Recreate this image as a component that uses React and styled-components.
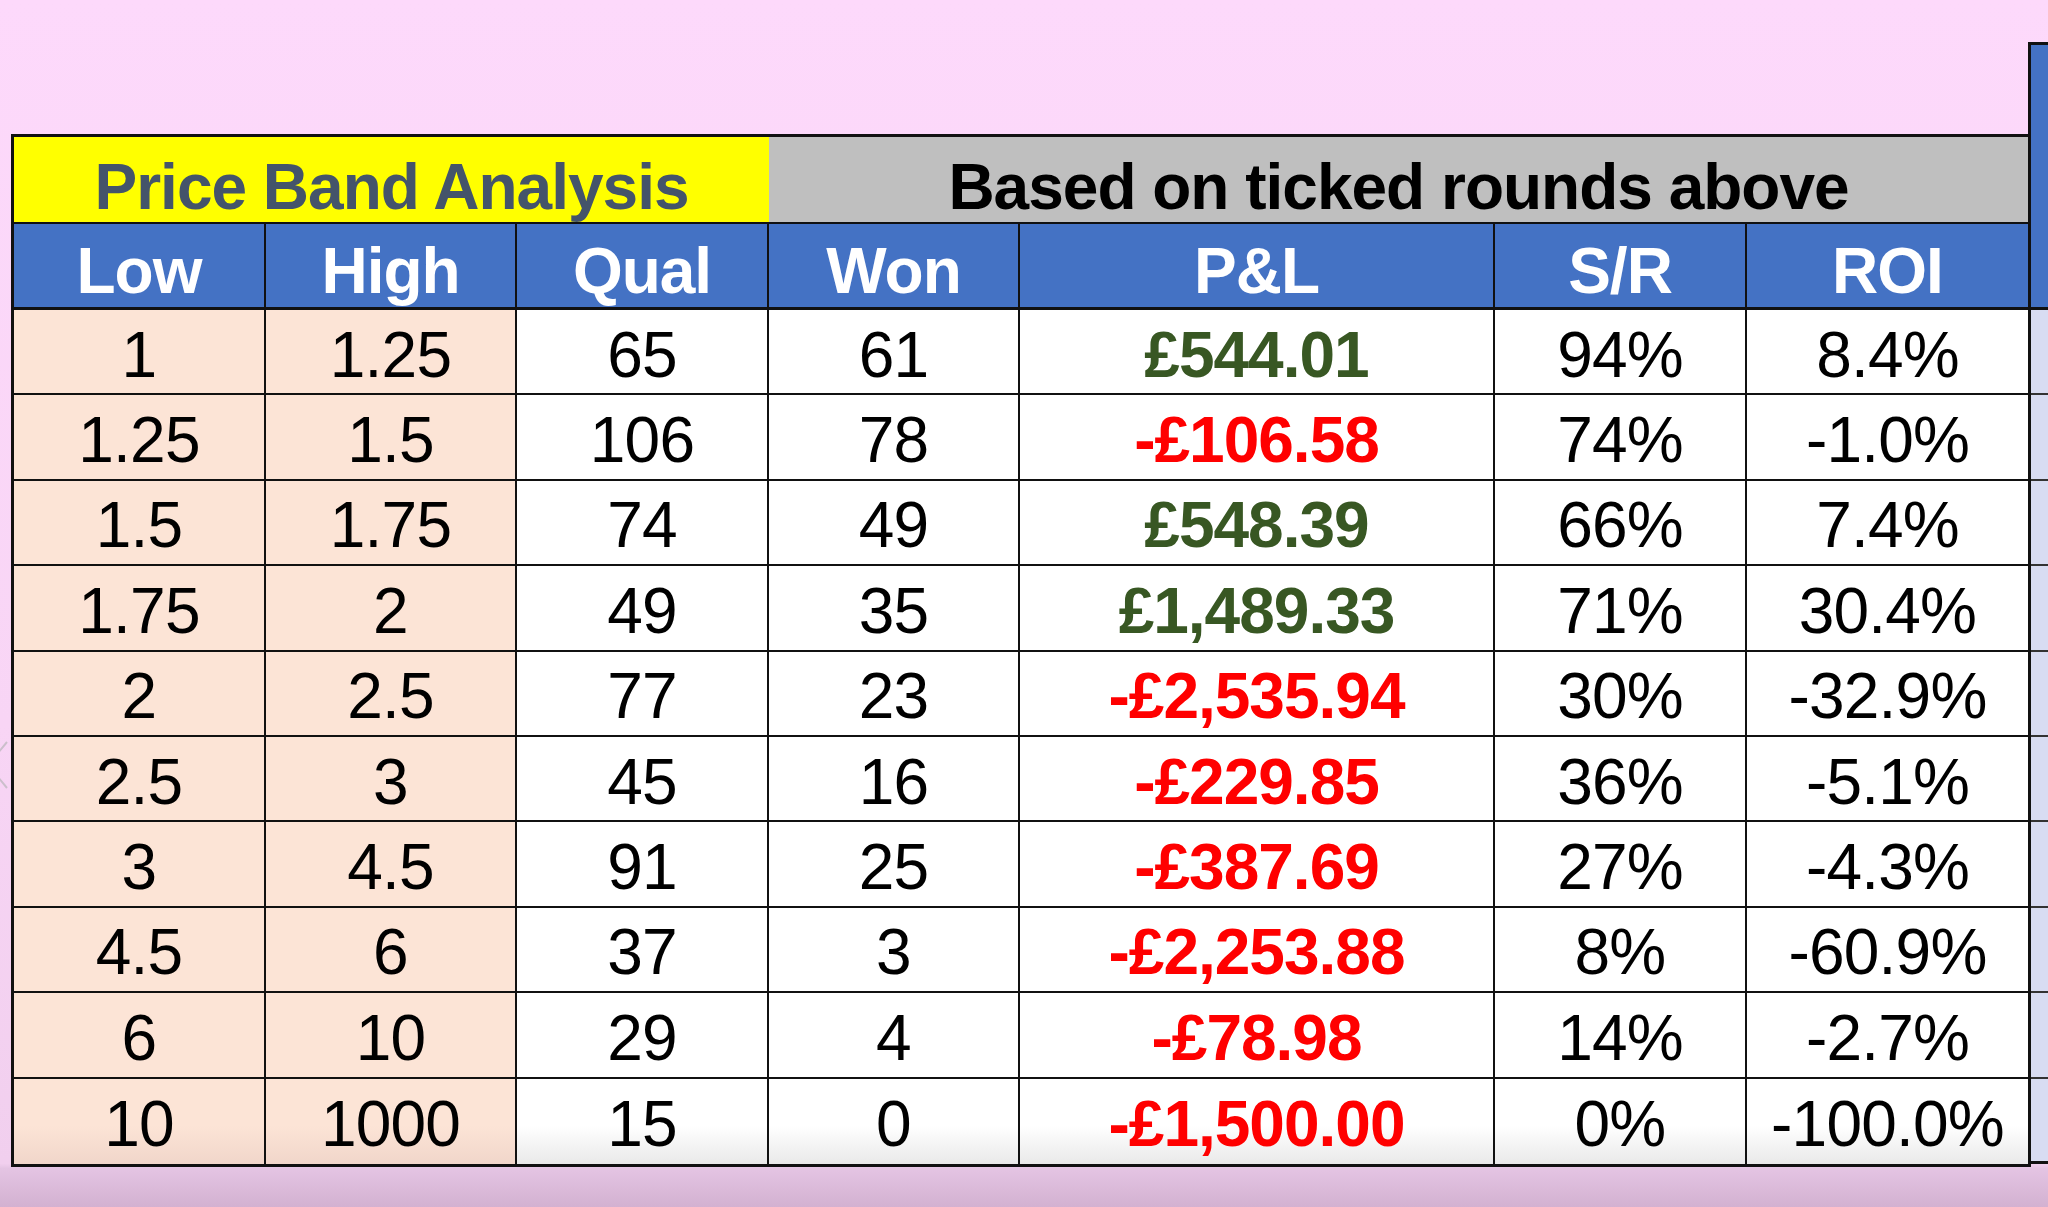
import React from "react";
import styled, { createGlobalStyle } from "styled-components";

const Global = createGlobalStyle`
  html, body { margin: 0; padding: 0; }
  body {
    width: 2048px;
    height: 1207px;
    overflow: hidden;
    font-family: "Liberation Sans", Arial, sans-serif;
  }
`;

const Page = styled.div`
  position: relative;
  width: 2048px;
  height: 1207px;
  box-sizing: border-box;
  display: flex;
  align-items: flex-start;
  padding: 42px 0 0 11px;
  overflow: hidden;
  font-family: "Liberation Sans", Arial, sans-serif;
  background: linear-gradient(
    to bottom,
    #fdd9fb 0%,
    #f8d5f5 60%,
    #f1cfee 96.4%,
    #e4c4e3 96.8%,
    #d3b1d1 100%
  );
`;

const Table = styled.div`
  flex: none;
  margin-top: 92px;
  display: grid;
  grid-template-columns: 252px 251px 252px 251px 475px 252px 281px;
  grid-template-rows: 87px 86px repeat(10, 85.4px);
  border: 3px solid #111;
  line-height: 1;
`;

const TitleCell = styled.div`
  grid-column: span ${(p) => p.$span};
  background: ${(p) => p.$bg};
  color: ${(p) => p.$color};
  font-size: 64px;
  letter-spacing: -1px;
  font-weight: 700;
  display: flex;
  align-items: center;
  justify-content: center;
  box-sizing: border-box;
  padding-top: 14px;
  border-bottom: 2px solid #111;
  white-space: nowrap;
`;

const HeadCell = styled.div`
  background: #4472c4;
  color: #fff;
  font-size: 64px;
  letter-spacing: -1px;
  font-weight: 700;
  display: flex;
  align-items: center;
  justify-content: center;
  box-sizing: border-box;
  padding-top: 10px;
  border-bottom: 3px solid #111;
  border-right: ${(p) => (p.$last ? "none" : "2px solid #111")};
`;

const Cell = styled.div`
  background: ${(p) => {
    const base = p.$band ? "#fce4d6" : "#ffffff";
    const shade = p.$band ? "#f1d6ca" : "#e9e9e9";
    return p.$lastRow ? `linear-gradient(to bottom, ${base} 55%, ${shade} 100%)` : base;
  }};
  color: ${(p) => p.$color || "#000"};
  font-size: 64px;
  letter-spacing: ${(p) => (p.$bold ? "-1px" : "-0.8px")};
  font-weight: ${(p) => (p.$bold ? 700 : 400)};
  display: flex;
  align-items: center;
  justify-content: center;
  box-sizing: border-box;
  padding-top: 6px;
  border-right: ${(p) => (p.$lastCol ? "none" : "2px solid #111")};
  border-bottom: ${(p) => (p.$lastRow ? "none" : "2px solid #111")};
  white-space: nowrap;
`;

const Side = styled.div`
  flex: 1;
  margin-left: -3px;
  display: grid;
  grid-template-rows: 265px repeat(10, 85.4px);
  border-top: 3px solid #111;
  border-left: 3px solid #111;
`;

const SideHead = styled.div`
  background: #4472c4;
  border-bottom: 3px solid #111;
`;

const SideRow = styled.div`
  background: #d8dcf2;
  box-sizing: border-box;
  border-bottom: ${(p) => (p.$last ? "3px solid #111" : "2px solid #333")};
`;

const Chevron = styled.svg`
  position: absolute;
  left: 0;
  top: 738px;
  width: 10px;
  height: 54px;
  overflow: visible;
`;

const rows = [
  ["1", "1.25", "65", "61", "£544.01", "94%", "8.4%"],
  ["1.25", "1.5", "106", "78", "-£106.58", "74%", "-1.0%"],
  ["1.5", "1.75", "74", "49", "£548.39", "66%", "7.4%"],
  ["1.75", "2", "49", "35", "£1,489.33", "71%", "30.4%"],
  ["2", "2.5", "77", "23", "-£2,535.94", "30%", "-32.9%"],
  ["2.5", "3", "45", "16", "-£229.85", "36%", "-5.1%"],
  ["3", "4.5", "91", "25", "-£387.69", "27%", "-4.3%"],
  ["4.5", "6", "37", "3", "-£2,253.88", "8%", "-60.9%"],
  ["6", "10", "29", "4", "-£78.98", "14%", "-2.7%"],
  ["10", "1000", "15", "0", "-£1,500.00", "0%", "-100.0%"],
];

const headers = ["Low", "High", "Qual", "Won", "P&L", "S/R", "ROI"];

export default function App() {
  return (
    <>
      <Global />
      <Page>
        <Table>
          <TitleCell $span={3} $bg="#ffff00" $color="#44546a">
            Price Band Analysis
          </TitleCell>
          <TitleCell $span={4} $bg="#bfbfbf" $color="#000">
            Based on ticked rounds above
          </TitleCell>
          {headers.map((h, i) => (
            <HeadCell key={h} $last={i === headers.length - 1}>
              {h}
            </HeadCell>
          ))}
          {rows.map((r, ri) =>
            r.map((v, ci) => {
              const isPL = ci === 4;
              const color = isPL ? (v.startsWith("-") ? "#ff0000" : "#385723") : "#000";
              return (
                <Cell
                  key={`${ri}-${ci}`}
                  $band={ci < 2}
                  $bold={isPL}
                  $color={color}
                  $lastCol={ci === 6}
                  $lastRow={ri === rows.length - 1}
                >
                  {v}
                </Cell>
              );
            })
          )}
        </Table>
        <Side>
          <SideHead />
          {rows.map((_, i) => (
            <SideRow key={i} $last={i === rows.length - 1} />
          ))}
        </Side>
        <Chevron viewBox="0 0 10 54">
          <polyline points="7,4 -12,27 7,50" fill="none" stroke="#cbbfcb" strokeWidth="2" />
        </Chevron>
      </Page>
    </>
  );
}
